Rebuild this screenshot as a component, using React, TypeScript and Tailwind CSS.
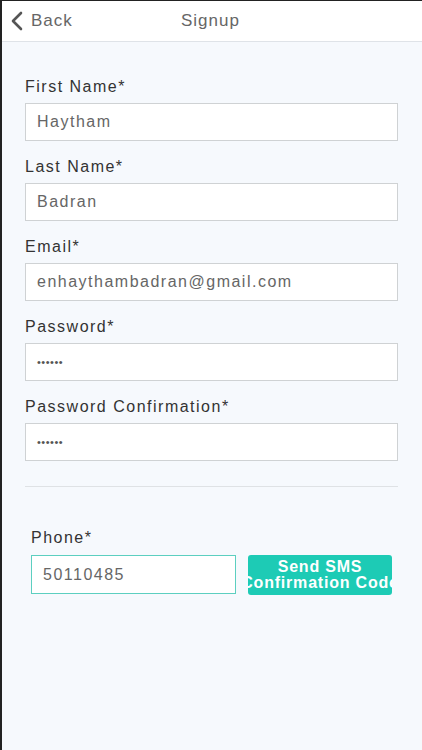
export default function App() {
    const fields = [
        { label: 'First Name*', value: 'Haytham' },
        { label: 'Last Name*', value: 'Badran' },
        { label: 'Email*', value: 'enhaythambadran@gmail.com' },
        { label: 'Password*', value: '••••••', secret: true },
        { label: 'Password Confirmation*', value: '••••••', secret: true },
    ];

    return (
        <div className="h-[750px] w-[422px] overflow-hidden border-l-2 border-t border-[#222] bg-[#f6f9fd] font-['Liberation_Sans',Arial,sans-serif]">
            <header className="relative flex h-[41px] items-center border-b border-[#dfe3e8] bg-white">
                <div className="flex items-center pl-[8px]">
                    <svg width="14" height="20" viewBox="0 0 14 20" fill="none">
                        <polyline points="11,2 3,10 11,18" stroke="#555" strokeWidth="2.6" strokeLinecap="round" strokeLinejoin="round" />
                    </svg>
                    <span className="ml-[7px] text-[17px] tracking-[1px] text-[#666]">Back</span>
                </div>
                <span className="absolute left-[179px] text-[17px] tracking-[1px] text-[#666]">Signup</span>
            </header>

            <main className="px-[23px] pt-[35px]">
                <div className="flex flex-col gap-[16px]">
                    {fields.map((f) => (
                        <div key={f.label}>
                            <div className="mb-[6px] h-[20px] text-[16px] leading-[20px] tracking-[1.5px] text-[#333]">{f.label}</div>
                            <div className="flex h-[38px] w-[373px] items-center border border-[#cfd2d4] bg-white px-[11px] text-[16px] tracking-[1.5px] text-[#666]">
                                {f.secret ? <span className="text-[11px] tracking-[0.5px] text-[#555]">{f.value}</span> : f.value}
                            </div>
                        </div>
                    ))}
                </div>

                <div className="mt-[25px] h-px w-[373px] bg-[#dfe2e5]" />

                <div className="mt-[41px] pl-[6px]">
                    <div className="mb-[7px] h-[20px] text-[16px] leading-[20px] tracking-[1.5px] text-[#333]">Phone*</div>
                    <div className="flex gap-[12px]">
                        <div className="flex h-[39px] w-[205px] items-center border border-[#5ccfc0] bg-white px-[11px] text-[16px] tracking-[1.5px] text-[#666]">
                            50110485
                        </div>
                        <button type="button" className="flex h-[40px] w-[144px] flex-col items-center justify-center overflow-hidden rounded-[3px] bg-[#1dcbb5] text-[16px] font-bold leading-[16px] tracking-[0.8px] whitespace-nowrap text-white">
                            <span>Send SMS</span>
                            <span>Confirmation Code</span>
                        </button>
                    </div>
                </div>
            </main>
        </div>
    );
}
